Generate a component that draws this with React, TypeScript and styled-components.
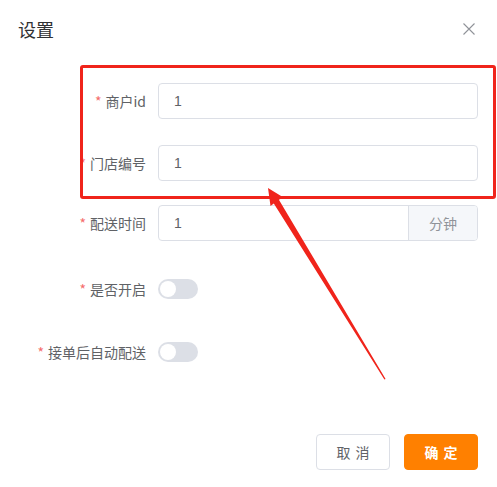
import React from "react";
import styled, { createGlobalStyle } from "styled-components";

const Global = createGlobalStyle`
  html, body { margin: 0; padding: 0; background: #fff; }
  body { font-family: "Noto Sans CJK SC", "Liberation Sans", sans-serif; }
  * { box-sizing: border-box; }
`;

const Dialog = styled.div`
  position: relative;
  width: 497px;
  height: 487px;
  background: #fff;
  overflow: hidden;
`;

const Header = styled.div`
  display: flex;
  align-items: center;
  justify-content: space-between;
  height: 24px;
  margin-top: 17px;
  padding: 0 21px 0 18px;
`;

const Title = styled.span`
  font-size: 18px;
  line-height: 24px;
  color: #303133;
`;

const Close = styled.button`
  border: 0;
  background: none;
  padding: 0;
  width: 14px;
  height: 14px;
  display: flex;
  align-items: center;
  justify-content: center;
  cursor: pointer;
`;

const Form = styled.div`
  display: flex;
  flex-direction: column;
  padding: 42px 19px 0 20px;
`;

const Row = styled.div<{ $mb: number }>`
  display: flex;
  align-items: center;
  height: 36px;
  margin-bottom: ${(p) => p.$mb}px;
`;

const Label = styled.label`
  width: 138px;
  flex: none;
  padding-right: 12px;
  text-align: right;
  font-size: 14px;
  color: #606266;
  white-space: nowrap;
`;

const Star = styled.span`
  color: #f56c6c;
  margin-right: 4px;
`;

const Control = styled.div`
  flex: 1;
  display: flex;
  align-items: center;
  height: 36px;
`;

const InputBox = styled.div`
  flex: 1;
  display: flex;
  height: 36px;
  border: 1px solid #dcdfe6;
  border-radius: 4px;
  overflow: hidden;
`;

const Input = styled.input`
  flex: 1;
  min-width: 0;
  border: 0;
  outline: none;
  padding: 0 15px;
  font-family: "Liberation Sans", "Noto Sans CJK SC", sans-serif;
  font-size: 14px;
  color: #606266;
  background: transparent;
`;

const Append = styled.div`
  width: 69px;
  flex: none;
  display: flex;
  align-items: center;
  justify-content: center;
  background: #f5f7fa;
  border-left: 1px solid #dcdfe6;
  color: #909399;
  font-size: 14px;
`;

const Switch = styled.span`
  position: relative;
  width: 40px;
  height: 20px;
  border-radius: 10px;
  background: #dcdfe6;
  &::after {
    content: "";
    position: absolute;
    top: 2px;
    left: 2px;
    width: 16px;
    height: 16px;
    border-radius: 50%;
    background: #fff;
  }
`;

const Footer = styled.div`
  display: flex;
  justify-content: flex-end;
  gap: 14px;
  padding: 0 19px 0 0;
  margin-top: 64px;
`;

const Button = styled.button<{ $primary?: boolean }>`
  width: 74px;
  height: 36px;
  border-radius: 4px;
  border: 1px solid ${(p) => (p.$primary ? "#ff8000" : "#dcdfe6")};
  background: ${(p) => (p.$primary ? "#ff8000" : "#fff")};
  color: ${(p) => (p.$primary ? "#fff" : "#606266")};
  font-family: "Noto Sans CJK SC", sans-serif;
  font-size: 14px;
  font-weight: ${(p) => (p.$primary ? 700 : 400)};
  letter-spacing: 1px;
  white-space: pre;
  padding: 0 0 0 1px;
  cursor: pointer;
`;

const Highlight = styled.div`
  position: absolute;
  left: 80px;
  top: 65px;
  width: 416px;
  height: 134px;
  border: 3px solid #f0241b;
  border-radius: 3px;
  pointer-events: none;
`;

const ArrowSvg = styled.svg`
  position: absolute;
  left: 0;
  top: 0;
  pointer-events: none;
`;

type Field = { label: string; kind: "input" | "append" | "switch"; mb: number };

const fields: Field[] = [
  { label: "商户id", kind: "input", mb: 26 },
  { label: "门店编号", kind: "input", mb: 24 },
  { label: "配送时间", kind: "append", mb: 30 },
  { label: "是否开启", kind: "switch", mb: 27 },
  { label: "接单后自动配送", kind: "switch", mb: 0 },
];

export default function App() {
  return (
    <>
      <Global />
      <Dialog>
        <Header>
          <Title>设置</Title>
          <Close aria-label="close">
            <svg width="12" height="12" viewBox="0 0 12 12">
              <path d="M0.5 0.5 L11.5 11.5 M11.5 0.5 L0.5 11.5" stroke="#909399" strokeWidth="1.1" />
            </svg>
          </Close>
        </Header>
        <Form>
          {fields.map((f) => (
            <Row key={f.label} $mb={f.mb}>
              <Label>
                <Star>*</Star>
                {f.label}
              </Label>
              <Control>
                {f.kind === "switch" ? (
                  <Switch />
                ) : (
                  <InputBox>
                    <Input defaultValue="1" />
                    {f.kind === "append" && <Append>分钟</Append>}
                  </InputBox>
                )}
              </Control>
            </Row>
          ))}
        </Form>
        <Footer>
          <Button>{"取 消"}</Button>
          <Button $primary>{"确 定"}</Button>
        </Footer>
        <Highlight />
        <ArrowSvg width="497" height="487" viewBox="0 0 497 487">
          <polygon
            points="268,188 283.5,197.5 278.9,199.7 385.6,379 384.4,379.6 273.8,203.4 270.5,206"
            fill="#f0241b"
          />
        </ArrowSvg>
      </Dialog>
    </>
  );
}
